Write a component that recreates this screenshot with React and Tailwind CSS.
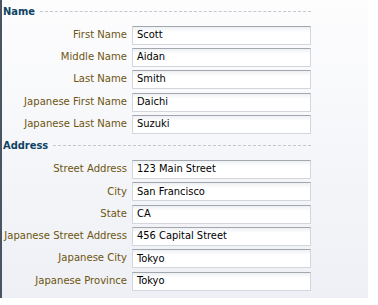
import React from 'react';

const nameFields = [
  { label: 'First Name', value: 'Scott' },
  { label: 'Middle Name', value: 'Aidan' },
  { label: 'Last Name', value: 'Smith' },
  { label: 'Japanese First Name', value: 'Daichi' },
  { label: 'Japanese Last Name', value: 'Suzuki' },
];

const addressFields = [
  { label: 'Street Address', value: '123 Main Street' },
  { label: 'City', value: 'San Francisco' },
  { label: 'State', value: 'CA' },
  { label: 'Japanese Street Address', value: '456 Capital Street' },
  { label: 'Japanese City', value: 'Tokyo' },
  { label: 'Japanese Province', value: 'Tokyo' },
];

const Heading = ({ title }) => (
  <div className="flex items-center h-[20px] pl-[1px] pr-[57px]">
    <span className="text-[11px] font-bold text-[#0d4463] leading-none">{title}</span>
    <span className="flex-1 ml-[5px] mt-[1px] border-t border-dashed border-[#c4c8ce]" />
  </div>
);

const Row = ({ label, value }) => (
  <div className="flex items-center h-[22.3px]">
    <label className="w-[125px] text-right text-[11.2px] text-[#6e5510] whitespace-nowrap">{label}</label>
    <div className="ml-[5px] w-[179px] h-[19px] bg-white border border-[#d3d6dc] border-t-[#a2a6ae] bg-gradient-to-b from-[#eef0f3] to-white to-[30%] flex items-center pl-[4px] text-[11px] text-black">
      {value}
    </div>
  </div>
);

const App = () => {
  return (
    <div className="w-[378px] h-[305px] bg-white" style={{ fontFamily: '"DejaVu Sans Condensed", "Liberation Sans", sans-serif' }}>
      <div className="w-[368px] h-[298px] border-l-2 border-[#4a5563] bg-gradient-to-b from-[#fdfdfe] to-[#eef0f5] pt-[1px]">
        <Heading title="Name" />
        <div className="mt-[3px]">
          {nameFields.map((f) => (
            <Row key={f.label} label={f.label} value={f.value} />
          ))}
        </div>
        <Heading title="Address" />
        <div className="mt-[3px]">
          {addressFields.map((f) => (
            <Row key={f.label} label={f.label} value={f.value} />
          ))}
        </div>
      </div>
    </div>
  );
};

export default App;
